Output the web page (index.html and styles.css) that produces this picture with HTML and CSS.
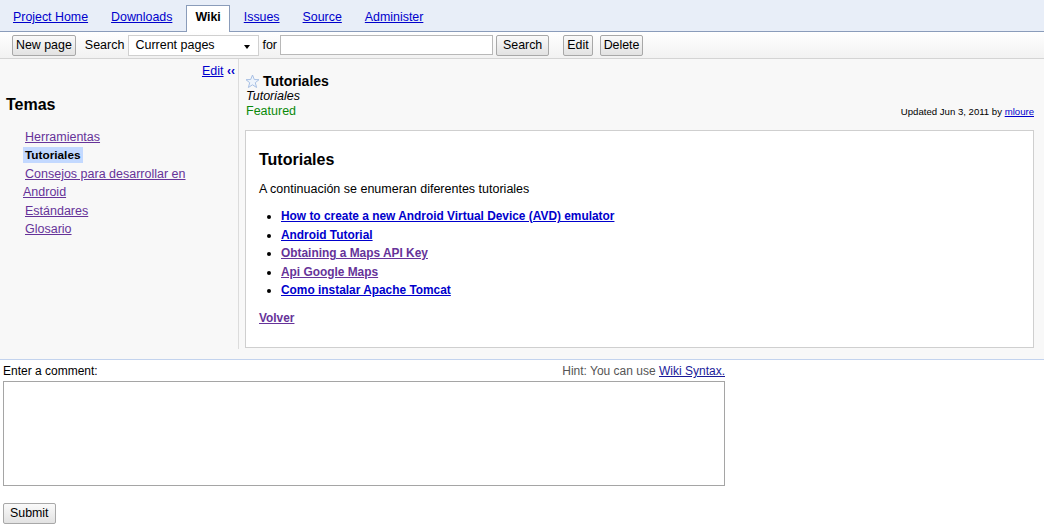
FILE: index.html
```html
<!DOCTYPE html>
<html>
<head>
<meta charset="utf-8">
<link rel="stylesheet" href="styles.css">
</head>
<body>
<div class="tabbar">
  <a class="tab" href="#">Project Home</a>
  <a class="tab" href="#">Downloads</a>
  <span class="tab active">Wiki</span>
  <a class="tab" href="#">Issues</a>
  <a class="tab" href="#">Source</a>
  <a class="tab" href="#">Administer</a>
</div>
<div class="toolbar">
  <button class="btn">New page</button>
  <span class="lbl">Search</span>
  <span class="select">Current pages<span class="arrow"></span></span>
  <span class="lbl lbl-for">for</span>
  <span class="input"></span>
  <button class="btn wide">Search</button>
  <button class="btn sep">Edit</button>
  <button class="btn">Delete</button>
</div>
<div class="main">
  <div class="sidebar">
    <div class="sidetop"><a href="#" class="blue">Edit</a> <span class="chev">‹‹</span></div>
    <h2 class="temas">Temas</h2>
    <ul class="nav">
      <li><a href="#" class="visited">Herramientas</a></li>
      <li><span class="cur">Tutoriales</span></li>
      <li><a href="#" class="visited">Consejos para desarrollar en Android</a></li>
      <li><a href="#" class="visited">Estándares</a></li>
      <li><a href="#" class="visited">Glosario</a></li>
    </ul>
  </div>
  <div class="content">
    <div class="head">
      <div class="summary">
        <div class="title"><svg class="star" width="15" height="15" viewBox="0 0 15 15"><polygon points="7.5,1 9.3,5.5 14,5.7 10.3,8.7 11.6,13.5 7.5,10.8 3.4,13.5 4.7,8.7 1,5.7 5.7,5.5" fill="#eef4fc" stroke="#a8c0e4" stroke-width="1" stroke-linejoin="round"/></svg><b>Tutoriales</b></div>
        <div class="sub">Tutoriales</div>
        <div class="feat">Featured</div>
      </div>
      <div class="updated">Updated Jun 3, 2011 by <a href="#" class="blue">mloure</a></div>
    </div>
    <div class="box">
      <h1 class="h1">Tutoriales</h1>
      <p class="para">A continuación se enumeran diferentes tutoriales</p>
      <ul class="links">
        <li><a href="#" class="blue">How to create a new Android Virtual Device (AVD) emulator</a></li>
        <li><a href="#" class="blue">Android Tutorial</a></li>
        <li><a href="#" class="visited">Obtaining a Maps API Key</a></li>
        <li><a href="#" class="visited">Api Google Maps</a></li>
        <li><a href="#" class="blue">Como instalar Apache Tomcat</a></li>
      </ul>
      <p class="back"><a href="#" class="visited">Volver</a></p>
    </div>
  </div>
</div>
<div class="comment">
  <div class="crow">
    <span>Enter a comment:</span>
    <span class="hint">Hint: You can use <a href="#" class="syn">Wiki Syntax.</a></span>
  </div>
  <div class="textarea"></div>
  <button class="btn wide submit">Submit</button>
</div>
</body>
</html>
```
FILE: styles.css
```css
body {
  margin: 0;
  font-family: "Liberation Sans", Arial, sans-serif;
  font-size: 12.5px;
  color: #000;
  background: #fff;
}
a { text-decoration: underline; }
.blue { color: #0000cc; }
.visited { color: #663399; }

.tabbar {
  background: #e8eef8;
  border-bottom: 1px solid #8a9cba;
  display: flex;
  align-items: flex-end;
  padding-left: 4px;
  gap: 5px;
  box-sizing: border-box;
  height: 32px;
}
.tab {
  display: block;
  padding: 0 8px;
  height: 26px;
  line-height: 21px;
  border: 1px solid transparent;
  border-bottom: 0;
  color: #0000cc;
  font-size: 12.4px;
  margin-bottom: -1px;
  box-sizing: border-box;
}
.tab.active {
  background: #fff;
  border-color: #8a9cba;
  color: #000;
  font-weight: bold;
  font-size: 12.4px;
  text-decoration: none;
  height: 27px;
  line-height: 23px;
}

.toolbar {
  height: 27px;
  background: linear-gradient(#ffffff, #f2f2f2);
  border-bottom: 1px solid #d4d4d4;
  display: flex;
  align-items: center;
  padding-left: 12px;
  box-sizing: border-box;
}
.btn {
  font-family: "Liberation Sans", Arial, sans-serif;
  font-size: 12.4px;
  height: 21px;
  padding: 0 3px;
  background: linear-gradient(#fafafa, #e2e2e2);
  border: 1px solid #a8a8a8;
  border-radius: 2px;
  color: #000;
  line-height: 19px;
}
.btn.wide { padding: 0 6px; }
.lbl { margin: 0 4px 0 9px; }
.lbl-for { margin: 0 3px 0 3px; }
.select {
  position: relative;
  display: inline-block;
  width: 131px;
  height: 21px;
  box-sizing: border-box;
  border: 1px solid #d0d0d0;
  background: #fff;
  line-height: 19px;
  padding-left: 6px;
}
.arrow {
  position: absolute;
  right: 8px;
  top: 9px;
  border-left: 3px solid transparent;
  border-right: 3px solid transparent;
  border-top: 4px solid #000;
}
.input {
  display: inline-block;
  width: 213px;
  height: 20px;
  box-sizing: border-box;
  border: 1px solid #b8b8b8;
  background: #fff;
  margin: 0 3px 0 0;
}
.sep { margin-left: 14px; margin-right: 7px; }

.main {
  display: flex;
  background: #f8f8f8;
  border-bottom: 1px solid #c3d3ee;
  min-height: 300px;
}
.sidebar {
  width: 239px;
  border-right: 1px solid #dcdcdc;
  box-sizing: border-box;
  margin-bottom: 10px;
}
.sidetop {
  text-align: right;
  padding: 5px 3px 0 0;
  height: 17px;
}
.chev { color: #0000cc; font-weight: bold; font-size: 12px; }
.temas {
  font-size: 16px;
  font-weight: bold;
  margin: 14px 0 0 6px;
  line-height: 20px;
}
.nav {
  list-style: none;
  margin: 13px 0 0 0;
  padding: 0 30px 0 23px;
}
.nav li {
  line-height: 18.4px;
  text-indent: 2px;
}
.cur {
  background: #c3d9ff;
  font-weight: bold;
  font-size: 11.8px;
  margin-left: -2px;
  padding: 1px 2px;
}

.content {
  flex: 1;
  padding: 14px 10px 11px 6px;
}
.head {
  display: flex;
  justify-content: space-between;
  align-items: flex-end;
}
.summary { line-height: 15px; }
.title { display: flex; align-items: center; font-size: 14px; height: 16px; }
.star { margin-right: 3px; }
.sub { font-style: italic; padding-left: 1px; }
.feat { color: #0a8a0a; padding-left: 1px; }
.updated { font-size: 9.6px; margin-bottom: 2px; }

.box {
  margin-top: 11px;
  background: #fff;
  border: 1px solid #cfcfcf;
  padding: 19px 13px 20px 13px;
}
.h1 {
  font-size: 16px;
  line-height: 20px;
  margin: 0 0 10px 0;
}
.para { margin: 0 0 9px 0; line-height: 18px; }
.links {
  margin: 0;
  padding-left: 22px;
}
.links li { line-height: 18.5px; font-weight: bold; font-size: 11.9px; }
.back { margin: 9px 0 0 0; font-weight: bold; font-size: 11.9px; line-height: 18px; }

.comment {
  padding: 3px 0 0 3px;
  width: 722px;
}
.crow {
  display: flex;
  justify-content: space-between;
  font-size: 12px;
  line-height: 17px;
}
.hint { color: #555; }
.syn { color: #1a1a99; }
.textarea {
  height: 105px;
  box-sizing: border-box;
  border: 1px solid #a5a5a5;
  background: #fff;
  margin-top: 1px;
}
.submit { margin-top: 17px; }
```
